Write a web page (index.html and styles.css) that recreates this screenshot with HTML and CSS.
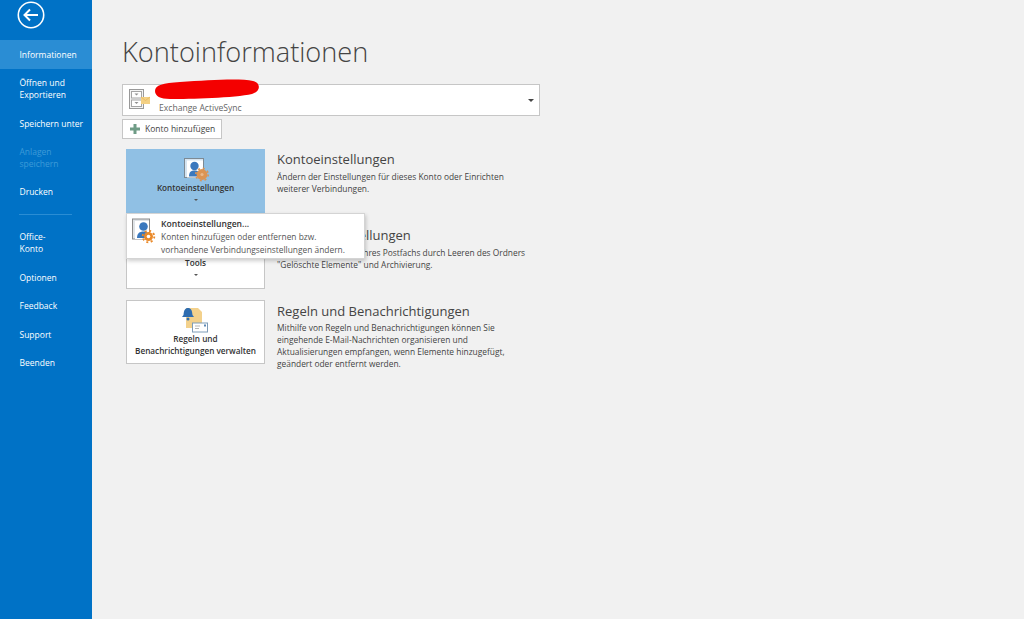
FILE: index.html
```html
<!DOCTYPE html>
<html lang="de">
<head>
<meta charset="utf-8">
<title>Kontoinformationen</title>
<link rel="stylesheet" href="styles.css">
</head>
<body>
<div class="app">
  <nav class="side">
    <div class="back">
      <svg width="28" height="28" viewBox="0 0 28 28"><circle cx="14" cy="14" r="12.700" fill="none" stroke="#fff" stroke-width="1.600"/><path d="M7.500 14H21M13 8.500L7.500 14L13 19.500" fill="none" stroke="#fff" stroke-width="2"/></svg>
    </div>
    <a class="item active">Informationen</a>
    <a class="item two">Öffnen und<br>Exportieren</a>
    <a class="item">Speichern unter</a>
    <a class="item two off">Anlagen<br>speichern</a>
    <a class="item">Drucken</a>
    <div class="rule"></div>
    <a class="item two">Office-<br>Konto</a>
    <a class="item">Optionen</a>
    <a class="item">Feedback</a>
    <a class="item">Support</a>
    <a class="item">Beenden</a>
  </nav>
  <main class="main">
    <h1 class="title">Kontoinformationen</h1>
    <div class="account">
      <svg class="acc-icon" width="24" height="24" viewBox="0 0 24 24"><rect x="1.500" y="1.500" width="14" height="19" fill="#f4f4f4" stroke="#999"/><rect x="3.500" y="3.500" width="10" height="6.500" fill="#fff" stroke="#a5a5a5"/><rect x="3.500" y="12" width="10" height="6.500" fill="#fff" stroke="#a5a5a5"/><path d="M6.500 5.500h4l-2 2zM6.500 14h4l-2 2z" fill="#8f8f8f"/><rect x="13" y="9" width="9" height="7" fill="#f3d084"/><path d="M13 9l4.500 3.500L22 9" fill="none" stroke="#e5b65e" stroke-width=".8"/></svg>
      <span class="acc-type">Exchange ActiveSync</span>
      <span class="caret"></span>
      <svg class="scribble" width="106" height="22" viewBox="0 0 106 22"><path d="M0 12C0 6 8 4 25 3C55 1 85 -1 98 2C106 4 106 12 97 15C80 19 35 20 15 20C5 20 0 17 0 12Z" fill="#f40000"/></svg>
    </div>
    <button class="add"><svg width="10" height="10" viewBox="0 0 10 10"><path d="M3.500 0h3v3.500H10v3H6.500V10h-3V6.500H0v-3h3.500z" fill="#6f9c86"/></svg>Konto hinzufügen</button>
    <section class="row r1">
      <div class="card on">
        <svg width="24" height="24" viewBox="0 0 24 24"><rect x=".5" y="4" width="19" height="19" fill="#d5e4f0" stroke="#7d8a94"/><rect x="3" y="6" width="16" height="17" fill="#fff"/><circle cx="10.500" cy="11.500" r="4.200" fill="#3a78bd"/><path d="M5 22c0-4.500 2-6 5.500-6s5.500 1.500 5.500 6z" fill="#3a78bd"/><circle cx="18" cy="20" r="5.400" fill="#dc9453"/><circle cx="18" cy="20" r="6.200" fill="none" stroke="#dc9453" stroke-width="1.600" stroke-dasharray="2 2.870"/><circle cx="18" cy="20" r="1.600" fill="#eab98c"/></svg>
        <b>Kontoeinstellungen</b>
        <span class="mini"></span>
      </div>
      <div class="text">
        <h2>Kontoeinstellungen</h2>
        <p>Ändern der Einstellungen für dieses Konto oder Einrichten<br>weiterer Verbindungen.</p>
      </div>
    </section>
    <section class="row r2">
      <div class="card">
        <b>Tools</b>
        <span class="mini"></span>
      </div>
      <div class="text">
        <h2>Postfacheinstellungen</h2>
        <p>Kürzen Sie die Größe Ihres Postfachs durch Leeren des Ordners<br>"Gelöschte Elemente" und Archivierung.</p>
      </div>
    </section>
    <section class="row r3">
      <div class="card">
        <svg width="26" height="25" viewBox="0 0 26 25"><path d="M3 3h12l4 4v16H3z" fill="#f3d18c"/><path d="M0.500 10C1 5 2 3 5 3s4 2 4.500 7l1.500 2H-1z" fill="#2f6db0"/><circle cx="5" cy="14" r="1.500" fill="#2f6db0"/><rect x="9.500" y="18" width="15" height="9" fill="#fff" stroke="#7f9db8"/><path d="M12 21h5M12 23.500h4" stroke="#b5b5b5"/><rect x="21" y="19.500" width="2" height="2" fill="#5a88b5"/></svg>
        <b>Regeln und<br>Benachrichtigungen verwalten</b>
      </div>
      <div class="text">
        <h2>Regeln und Benachrichtigungen</h2>
        <p>Mithilfe von Regeln und Benachrichtigungen können Sie<br>eingehende E-Mail-Nachrichten organisieren und<br>Aktualisierungen empfangen, wenn Elemente hinzugefügt,<br>geändert oder entfernt werden.</p>
      </div>
    </section>
    <div class="menu">
      <svg width="24" height="28" viewBox="0 0 24 28"><rect x=".5" y="1" width="17" height="20" fill="#dfe3e6" stroke="#8a8a8a"/><rect x="3" y="3" width="14" height="18" fill="#fff"/><circle cx="11.500" cy="8.500" r="4.300" fill="#3a78bd"/><path d="M5 20c0-4.500 2.500-6.500 6.500-6.500s5.500 2 5.500 6.500z" fill="#3a78bd"/><circle cx="16.500" cy="18.500" r="4.500" fill="#ea8a2a"/><circle cx="16.500" cy="18.500" r="5.800" fill="none" stroke="#ea8a2a" stroke-width="1.800" stroke-dasharray="2 2.550"/><circle cx="16.500" cy="18.500" r="1.800" fill="#fff"/></svg>
      <div>
        <strong>Kontoeinstellungen...</strong>
        <p>Konten hinzufügen oder entfernen bzw.<br>vorhandene Verbindungseinstellungen ändern.</p>
      </div>
    </div>
  </main>
</div>
</body>
</html>
```
FILE: styles.css
```css
* { box-sizing: border-box; }
html, body { margin: 0; height: 100%; overflow: hidden; }
body { font-family: "Open Sans", "Noto Sans", sans-serif; color: #444; background: #f1f1f1; }
.app { display: flex; height: 619px; }

.side { width: 92px; flex: none; background: #0072c6; color: #fff; font-size: 8.500px; line-height: 12px; }
.back { height: 40px; padding: 1px 0 0 17px; }
.back svg { display: block; }
.item { display: flex; align-items: center; height: 28.500px; padding: 1.500px 0 0 19.500px; white-space: nowrap; }
.item.two { height: 40px; }
.item.active { background: #2a8dd4; }
.item.off { color: #3d9ad8; }
.rule { height: 1px; width: 53px; margin: 8px 0 8px 19px; background: #2a8dd4; }

.main { position: relative; flex: 1; padding: 0 0 0 30px; }
.title { margin: 0; padding-top: 33px; height: 84px; font-size: 27.200px; line-height: 38px; font-weight: 300; color: #444; }
.account { position: relative; width: 418px; height: 32px; background: #fff; border: 1px solid #c6c6c6; }
.acc-icon { position: absolute; left: 5px; top: 3px; }
.acc-type { position: absolute; left: 36px; top: 17px; font-size: 8.600px; line-height: 12px; color: #666; }
.caret { position: absolute; right: 5px; top: 14px; border: 3px solid transparent; border-top: 3px solid #444; border-bottom: 0; }
.scribble { position: absolute; left: 32px; top: -6px; }
.add { display: flex; align-items: center; gap: 5px; margin: 3px 0 0; padding: 0 0 0 7px; width: 100px; height: 20px; background: #fff; border: 1px solid #c6c6c6; font: 8.500px/12px "Open Sans", sans-serif; color: #444; }

.row { display: flex; height: 64px; margin: 11.500px 0 0 4px; }
.row.r1 { margin-top: 10px; }
.card { width: 139px; height: 64px; flex: none; display: flex; flex-direction: column; align-items: center; background: #fff; border: 1px solid #c6c6c6; padding-top: 4px; text-align: center; }
.card.on { background: #90c0e4; border-color: #90c0e4; }
.card svg { display: block; height: 25px; margin-bottom: 3px; overflow: visible; flex: none; }
.card b { font-weight: 600; font-size: 8.200px; line-height: 12px; color: #333; white-space: nowrap; }
.r2 .card { padding-top: 31px; }
.mini { margin-top: 5px; border: 2px solid transparent; border-top: 2px solid #555; border-bottom: 0; }
.text { margin-left: 12px; }
.text h2 { margin: 0; font-weight: 400; font-size: 13px; line-height: 20px; color: #444; }
.text p { margin: 2px 0 0; font-size: 8.400px; line-height: 12px; color: #444; white-space: nowrap; }
.r3 h2 { padding-top: 1px; }
.r3 .text p { margin-top: 1px; }

.menu { position: absolute; left: 34px; top: 213px; width: 239px; height: 46px; display: flex; gap: 5px; padding: 4px 0 0 5px; background: #fff; border: 1px solid #d4d4d4; box-shadow: 1px 2px 4px rgba(0,0,0,.2); }
.menu svg { flex: none; overflow: visible; }
.menu strong { display: block; font-weight: 600; font-size: 8.600px; line-height: 12px; color: #333; }
.menu p { margin: 1px 0 0; font-size: 8.400px; line-height: 12.500px; color: #555; white-space: nowrap; }
```
